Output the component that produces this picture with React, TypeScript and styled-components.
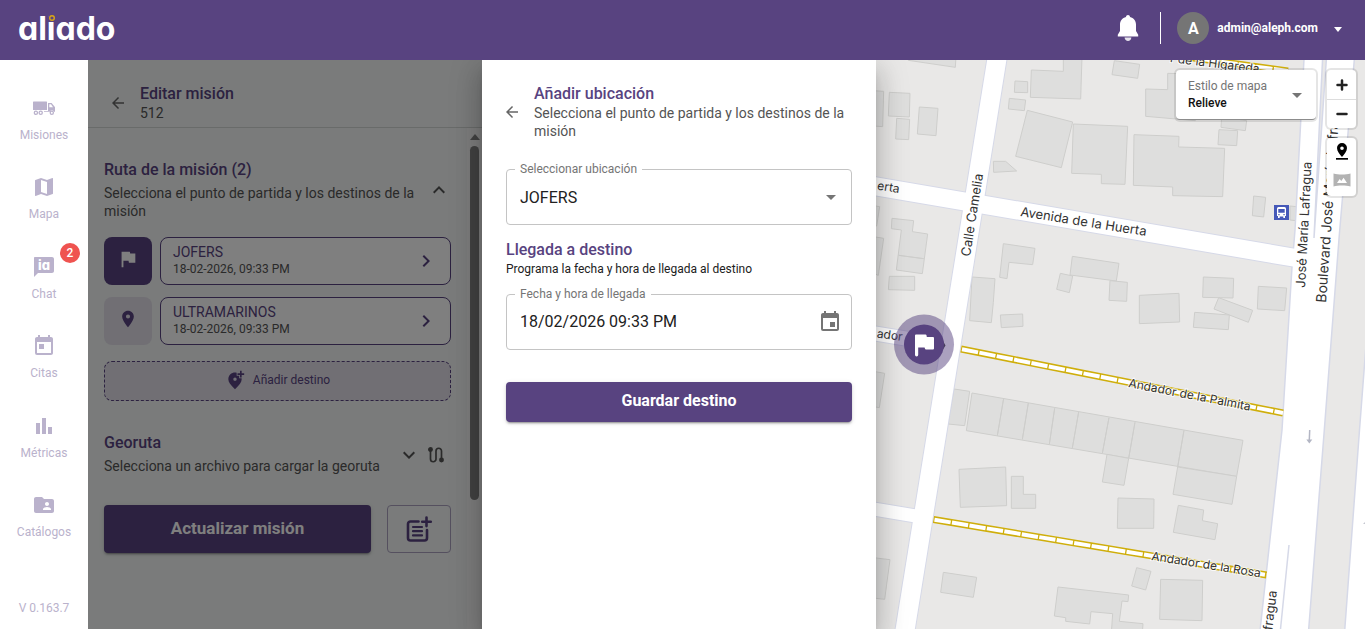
import React from 'react';
import styled, { createGlobalStyle } from 'styled-components';
import {
  MdAddLocationAlt,
  MdArrowBack,
  MdArrowDropDown,
  MdChevronRight,
  MdEvent,
  MdFlag,
  MdFolderShared,
  MdKeyboardArrowDown,
  MdKeyboardArrowUp,
  MdMap,
  MdPlace,
  MdToday,
} from 'react-icons/md';

const purple = '#584380';
const muted = '#bab2cc';

const GlobalStyle = createGlobalStyle`
  *, *::before, *::after { box-sizing: border-box; }
  body {
    margin: 0;
    font-family: Roboto, "Liberation Sans", sans-serif;
    color: #212121;
    background: #fff;
  }
  button, input, select { font-family: inherit; }
  h1, h2, p, ul { margin: 0; padding: 0; }
  svg { display: block; flex: none; }
`;

/* ---------- shell ---------- */

const Page = styled.div`
  display: flex;
  flex-direction: column;
  min-height: 100vh;
`;

const TopBar = styled.header`
  position: relative;
  z-index: 3;
  display: flex;
  align-items: center;
  justify-content: space-between;
  height: 60px;
  padding: 0 20px 4px 18px;
  background: ${purple};
  color: #fff;
`;

const Account = styled.div`
  display: flex;
  align-items: center;
  gap: 16px;
`;

const PlainButton = styled.button`
  display: flex;
  flex: none;
  align-items: center;
  justify-content: center;
  padding: 0;
  border: 0;
  background: none;
  color: inherit;
  cursor: pointer;
`;

const BellButton = styled(PlainButton)`
  width: 32px;
  height: 32px;
`;

const Divider = styled.span`
  width: 1px;
  height: 32px;
  background: #fff;
`;

const UserButton = styled(PlainButton)`
  gap: 8px;
  font-size: 12px;
  font-weight: 700;
`;

const Avatar = styled.span`
  display: grid;
  place-items: center;
  width: 32px;
  height: 32px;
  border-radius: 50%;
  background: #757575;
  font-size: 16px;
  font-weight: 700;
`;

const Caret = styled.span`
  margin: 2px 3px 0 8px;
  border: 4px solid transparent;
  border-top: 5px solid #fff;
  border-bottom: 0;
`;

const Main = styled.main`
  display: flex;
  flex: 1;
`;

/* ---------- side navigation ---------- */

const SideNav = styled.nav`
  display: flex;
  flex-direction: column;
  flex: none;
  width: 88px;
  padding-top: 20px;
  background: #fff;
  color: ${muted};
  text-align: center;
`;

const NavList = styled.ul`
  display: flex;
  flex: 1;
  flex-direction: column;
  list-style: none;
`;

const NavItem = styled.li`
  flex: 1;
  display: grid;
  place-items: center;
  min-height: 64px;
`;

const NavLink = styled.a`
  position: relative;
  display: flex;
  flex-direction: column;
  align-items: center;
  gap: 6px;
  width: 100%;
  color: inherit;
  font-size: 12px;
  line-height: 18px;
  text-decoration: none;
`;

const Badge = styled.span`
  position: absolute;
  top: -12px;
  right: 8px;
  width: 20px;
  height: 20px;
  border-radius: 50%;
  background: #ef5350;
  color: #fff;
  font-size: 12px;
  font-weight: 500;
  line-height: 20px;
`;

const Version = styled.p`
  height: 72px;
  padding-top: 42px;
  font-size: 12px;
  line-height: 18px;
`;

/* ---------- mission panel ---------- */

const Panel = styled.section`
  position: relative;
  display: flex;
  flex: none;
  flex-direction: column;
  width: 394px;
  background: #f4f7f6;
`;

const Backdrop = styled.div`
  position: absolute;
  inset: 0;
  background: rgba(0, 0, 0, 0.5);
`;

const PaneHeader = styled.header<{ $ruled?: boolean }>`
  display: flex;
  align-items: center;
  gap: 8px;
  padding: 24px 16px 5px;
  border-bottom: ${(p) => (p.$ruled ? '1px solid #d3d6d5' : '0')};
`;

const BackButton = styled(PlainButton)`
  width: 28px;
  height: 28px;
  color: #666;
`;

const Title = styled.h2`
  color: ${purple};
  font-size: 16px;
  font-weight: 500;
  line-height: 20px;
`;

const Lead = styled.p<{ $gap?: number }>`
  margin-top: ${(p) => p.$gap ?? 0}px;
  color: #545454;
  font-size: 14px;
  line-height: 18px;
`;

const PanelBody = styled.div`
  display: flex;
  flex: 1;
`;

const PanelContent = styled.div`
  flex: 1;
  padding: 32px 16px;
`;

const SectionHead = styled.div`
  display: flex;
  align-items: center;
  justify-content: space-between;
  color: #545454;
`;

const HeadActions = styled.div`
  display: flex;
  align-items: center;
  gap: 6px;
  padding: 2px 6px 0 0;
`;

const StopList = styled.ul`
  display: flex;
  flex-direction: column;
  gap: 12px;
  margin: 17px 0 16px;
  list-style: none;
`;

const Stop = styled.li`
  display: flex;
  gap: 8px;
`;

const StopIcon = styled.span<{ $first?: boolean }>`
  display: grid;
  place-items: center;
  width: 48px;
  height: 48px;
  padding-bottom: 4px;
  border-radius: 8px;
  background: ${(p) => (p.$first ? purple : '#e2dfe9')};
  color: ${(p) => (p.$first ? '#fff' : purple)};
`;

const StopCard = styled.button`
  display: flex;
  flex: 1;
  align-items: center;
  justify-content: space-between;
  padding: 0 12px;
  border: 1px solid ${purple};
  border-radius: 8px;
  background: #fff;
  color: ${purple};
  text-align: left;
`;

const StopName = styled.span`
  display: block;
  font-size: 14px;
  line-height: 16px;
`;

const StopTime = styled.span`
  display: block;
  color: #545454;
  font-size: 12px;
  line-height: 18px;
`;

const AddStop = styled.button`
  display: flex;
  align-items: center;
  justify-content: center;
  gap: 8px;
  width: 100%;
  height: 40px;
  margin-bottom: 32px;
  padding-bottom: 3px;
  border: 1px dashed ${purple};
  border-radius: 8px;
  background: #e2dfe9;
  color: ${purple};
  font-size: 12px;
`;

const Actions = styled.div`
  display: flex;
  gap: 16px;
  margin-top: 30px;
`;

const PrimaryButton = styled.button<{ $tall?: boolean }>`
  flex: 1;
  width: 100%;
  height: ${(p) => (p.$tall ? 48 : 40)}px;
  padding: 0 0 3px;
  border: 0;
  border-radius: 4px;
  background: ${purple};
  color: #fff;
  font-size: ${(p) => (p.$tall ? 17 : 16)}px;
  font-weight: 700;
  box-shadow: 0 3px 1px -2px rgba(0, 0, 0, 0.2), 0 2px 2px rgba(0, 0, 0, 0.14),
    0 1px 5px rgba(0, 0, 0, 0.12);
`;

const NoteButton = styled(PlainButton)`
  width: 64px;
  height: 48px;
  border: 1px solid #aba1bf;
  border-radius: 4px;
  color: ${purple};
`;

const Scrollbar = styled.div`
  display: flex;
  flex-direction: column;
  align-items: center;
  gap: 6px;
  width: 15px;
  padding: 6px 0;
  background: #fafafa;
`;

const ScrollArrow = styled.span`
  border: 5px solid transparent;
  border-bottom: 6px solid #858585;
  border-top: 0;
`;

const ScrollThumb = styled.span`
  width: 9px;
  height: 354px;
  border-radius: 5px;
  background: #858585;
`;

/* ---------- location drawer ---------- */

const Drawer = styled.aside`
  position: relative;
  z-index: 2;
  flex: none;
  width: 394px;
  background: #fff;
  box-shadow: 0 8px 10px -5px rgba(0, 0, 0, 0.2), 0 16px 24px 2px rgba(0, 0, 0, 0.14),
    0 6px 30px 5px rgba(0, 0, 0, 0.12);
`;

const Form = styled.form`
  display: flex;
  flex-direction: column;
  padding: 24px;
`;

const Field = styled.div`
  position: relative;
  display: flex;
  align-items: center;
  height: 56px;
  color: #757575;
`;

const FieldLabel = styled.label`
  position: absolute;
  top: -8px;
  left: 9px;
  padding: 0 5px;
  background: #fff;
  font-size: 12px;
  line-height: 16px;
`;

const controlStyle = `
  width: 100%;
  height: 56px;
  border: 1px solid #c4c4c4;
  border-radius: 4px;
  appearance: none;
  background: #fff;
  color: #212121;
  font-size: 16px;
`;

const SelectBox = styled.select`
  ${controlStyle}
  padding: 0 48px 0 13px;
`;

const DateBox = styled.input`
  ${controlStyle}
  padding: 0 48px 2px 13px;
`;

const FieldIcon = styled.span`
  position: absolute;
  right: 9px;
  pointer-events: none;
`;

const FieldButton = styled(PlainButton)`
  position: absolute;
  right: 10px;
`;

const Hint = styled.p`
  margin: 0 0 16px;
  font-size: 12px;
  line-height: 18px;
`;

const ArrivalTitle = styled(Title)`
  margin-top: 15px;
`;

const SubmitRow = styled.div`
  display: flex;
  margin-top: 32px;
`;

/* ---------- map ---------- */

const MapArea = styled.section`
  position: relative;
  flex: 1;
  min-width: 0;
  overflow: hidden;
  background: #e9e8e7;
`;

const MapCanvas = styled.svg`
  position: absolute;
  inset: 0;
  width: 100%;
  height: 100%;
`;

const MapControls = styled.div`
  position: absolute;
  top: 10px;
  right: 9px;
  display: flex;
  align-items: flex-start;
  gap: 11px;
`;

const StylePicker = styled.div`
  position: relative;
  width: 140px;
  height: 50px;
  padding: 8px 12px 0;
  border-bottom: 1px solid #8c8c8c;
  border-radius: 4px;
  background: #fff;
  box-shadow: 0 0 0 2px rgba(0, 0, 0, 0.1);
  color: #757575;
`;

const StyleLabel = styled.label`
  display: block;
  font-size: 12px;
  line-height: 16px;
`;

const StyleSelect = styled.select`
  display: block;
  width: 100%;
  height: 18px;
  padding: 0;
  border: 0;
  appearance: none;
  background: none;
  color: #111;
  font-size: 12px;
  font-weight: 500;
`;

const StyleArrow = styled.span`
  position: absolute;
  top: 13px;
  right: 7px;
  pointer-events: none;
`;

const ControlColumn = styled.div`
  display: flex;
  flex-direction: column;
  gap: 10px;
`;

const ControlGroup = styled.div`
  border-radius: 4px;
  background: #fff;
  box-shadow: 0 0 0 2px rgba(0, 0, 0, 0.1);
`;

const MapButton = styled(PlainButton)<{ $ruled?: boolean }>`
  width: 29px;
  height: 29px;
  color: #222;
  border-top: ${(p) => (p.$ruled ? '1px solid #ddd' : '0')};
`;

/* ---------- drawings ---------- */

const Logo = () => (
  <svg width="106" height="48" viewBox="0 -6 106 48" role="img" aria-label="aliado">
    <text
      x="0"
      y="30"
      fill="#fff"
      fontFamily="Inter, sans-serif"
      fontWeight="700"
      fontSize="32"
      style={{ fontFeatureSettings: '"cv11"' }}
    >
      aliado
    </text>
    <circle cx="34" cy="8" r="4" fill={purple} />
    <circle cx="34" cy="8" r="2.3" fill="none" stroke="#d9a514" strokeWidth="1.4" />
  </svg>
);

const Bell = () => (
  <svg width="22" height="28" viewBox="0 0 22 28" fill="currentColor">
    <path d="M11 1c1.1 0 2 .8 2 1.9 3.7.8 6 3.7 6 7.6v6.6l2.2 3.6v1.800H.8v-1.800L3 17.100v-6.600C3 6.600 5.300 3.700 9 2.900 9 1.800 9.900 1 11 1z" />
    <path d="M7.600 23.600h6.800c-.2 2-1.600 3.400-3.400 3.400s-3.200-1.400-3.400-3.400z" opacity=".85" />
  </svg>
);

const Truck = () => (
  <svg width="24" height="24" viewBox="0 0 24 24" fill="currentColor">
    <path d="M1.600 5.500h12.800c.4 0 .6.200.6.600V14H1V6.100c0-.4.200-.6.600-.6z" />
    <path
      fillRule="evenodd"
      d="M16 7h3.600l2.900 3.600.5.700v4.500h-.9a2.300 2.300 0 0 0-4.400 0H12V15h4zm1.300 1.300v3h3.700l-2-3z"
    />
    <g fill="none" stroke="currentColor" strokeWidth="1.300">
      <circle cx="3.900" cy="16.800" r="1.600" />
      <circle cx="8.700" cy="16.800" r="1.600" />
      <circle cx="19.800" cy="16.800" r="1.600" />
    </g>
  </svg>
);

const ChatIa = () => (
  <svg width="24" height="24" viewBox="0 0 24 24">
    <path fill="currentColor" d="M20 2H3c-.6 0-1 .4-1 1v19l4-4h14c1.100 0 2-.9 2-2V4c0-1.100-.9-2-2-2z" />
    <text
      x="12"
      y="14.500"
      textAnchor="middle"
      fill="#fff"
      fontFamily="Inter, sans-serif"
      fontWeight="800"
      fontSize="13"
      style={{ fontFeatureSettings: '"cv11"' }}
    >
      ia
    </text>
  </svg>
);

const Bars = () => (
  <svg width="24" height="24" viewBox="0 0 24 24" fill="currentColor">
    <path d="M4 9h4v11H4zm12 4h4v7h-4zm-6-9h4v16h-4z" />
  </svg>
);

const RouteIcon = () => (
  <svg width="18" height="18" viewBox="0 0 18 18" fill="none" stroke="currentColor" strokeWidth="1.700">
    <path d="M3.500 4v9a2.750 2.750 0 0 0 5.500 0V5a2.750 2.750 0 0 1 5.500 0v9" />
    <circle cx="3.500" cy="3.500" r="1.600" fill="currentColor" />
    <circle cx="14.500" cy="14" r="1.600" fill="currentColor" />
  </svg>
);

const NoteAdd = () => (
  <svg width="28" height="28" viewBox="0 0 28 28" fill="none" stroke="currentColor" strokeWidth="2.600" strokeLinecap="round">
    <path d="M13.500 6.500H5.500a2.500 2.500 0 0 0-2.500 2.500v14a2.500 2.500 0 0 0 2.500 2.500h14a2.500 2.500 0 0 0 2.500-2.500V15" />
    <path d="M21.500 2.500v8.600M17.200 6.800h8.600" />
    <path d="M8 12h9M8 16.200h9M8 20.400h9" strokeWidth="2.200" />
  </svg>
);

/* ---------- map data ---------- */

type Tile = { x: number; y: number; shapes: string[] };

/* Building outlines per tile, in thirds of a map pixel. */
const tiles: Tile[] = [
  {
    x: 870,
    y: 0,
    shapes: [
      '115,181 256,202 258,170 115,170',
      '10,272 41,274 38,380 10,378',
      '58,277 120,280 118,351 55,348',
      '80,355 119,358 116,419 77,417',
      '148,321 204,325 198,407 142,402',
      '370,484 407,484 440,513 371,517',
      '435,243 473,245 473,278 433,277',
      '418,295 467,300 463,332 415,327',
      '484,210 580,214 580,170 636,170 632,297 481,292',
      '472,331 608,366 574,503 437,469',
      '610,372 773,379 765,553 694,551 694,523 605,520',
      '733,182 809,193 803,235 726,224',
      '79,810 94,690 64,686 66,655 131,662 127,695 173,702 157,821',
      '86,766 161,776',
      '10,617 29,620 20,678 10,677',
      '10,710 41,715 25,826 10,820',
    ],
  },
  {
    x: 1120,
    y: 0,
    shapes: [
      '77,267 143,269 143,220 230,222 226,362 77,349',
      '42,404 177,409 176,441 314,445 308,590 158,587 158,561 40,556',
      '305,350 380,362 376,392 303,382',
      '297,389 353,392 350,437 294,434',
      '401,588 437,592 431,651 397,647',
      '510,618 530,620 528,662 510,660',
    ],
  },
  {
    x: 870,
    y: 230,
    shapes: [
      '400,41 495,55 488,104 417,97 411,146 389,142',
      '306,141 375,146 370,217 364,278 299,272',
      '391,255 458,252 459,289 394,293',
      '607,79 747,100 739,153 600,135',
      '571,130 608,138 598,188 560,178',
      '720,152 772,157 770,214 717,211',
      '58,139 134,139 134,181 55,179',
      '10,424 44,430 28,533 10,530',
      '252,477 299,484 284,587 234,582',
      '306,489 1119,631 1100,739 289,602',
      '401,505 382,617',
      '475,519 457,628',
      '554,535 538,643',
      '626,546 607,654',
      '717,563 697,670',
      '795,577 776,685',
      '942,601 923,711',
      '711,673 697,756 762,766 776,685',
      '923,711 909,793 1086,823 1100,739',
    ],
  },
  {
    x: 1110,
    y: 230,
    shapes: [
      '88,196 207,190 209,276 88,281',
      '280,141 371,145 369,204 278,202',
      '326,203 428,241 415,277 312,237',
      '254,247 358,255 355,299 250,292',
      '445,169 530,174 524,242 442,237',
    ],
  },
  {
    x: 870,
    y: 420,
    shapes: [
      '267,148 407,141 410,257 271,262',
      '424,169 460,169 460,223 497,223 497,265 424,265',
      '10,413 60,419 44,538 10,534',
      '220,457 320,472 310,532 212,517',
      '564,501 776,525 774,545 756,543 748,604 819,611 817,640 724,640 728,581 663,575 659,612 587,604 587,593 553,588',
    ],
  },
  {
    x: 1110,
    y: 420,
    shapes: [
      '24,234 132,237 131,325 22,325',
      '205,256 281,270 277,302 323,311 315,359 190,337',
      '80,443 123,454 107,510 65,498',
      '152,478 278,481 276,602 149,598',
    ],
  },
];

const streets = [
  { d: 'M1000 40L902 649', w: 19 },
  { d: 'M866 184.600L1305 259.500', w: 18 },
  { d: 'M866 507.800L925 517.500', w: 13 },
  { d: 'M866 332L945 345', w: 14 },
];

const walkways = ['M961 349L1283 413', 'M933.500 519.500L1266.500 575', 'M1150 52L1288 71'];

type Label = { x: number; y: number; turn: number; text: string; size?: number; end?: boolean };

const labels: Label[] = [
  { x: 1259, y: 73, turn: 7, text: 'r de la Higareda', size: 12, end: true },
  { x: 899, y: 193, turn: 9, text: 'erta', size: 12, end: true },
  { x: 902, y: 341, turn: 8, text: 'ador', size: 12, end: true },
  { x: 1020, y: 216, turn: 9, text: 'Avenida de la Huerta' },
  { x: 970, y: 257, turn: -81, text: 'Calle Camelia' },
  { x: 1305, y: 288, turn: -87, text: 'José María Lafragua' },
  { x: 1326, y: 303, turn: -86, text: 'Boulevard José María Lafragua', size: 14 },
  { x: 1128, y: 387, turn: 11, text: 'Andador de la Palmita', size: 12 },
  { x: 1151, y: 560, turn: 9, text: 'Andador de la Rosa', size: 12 },
  { x: 1277, y: 591, turn: -83, text: 'fragua', end: true },
];

const StreetMap = () => (
  <MapCanvas viewBox="876 60 489 569" preserveAspectRatio="xMinYMin slice" role="img" aria-label="Mapa">
    {tiles.map((tile) => (
      <g
        key={`${tile.x}-${tile.y}`}
        transform={`translate(${tile.x} ${tile.y}) scale(0.33333)`}
        fill="#dededd"
        stroke="#cececc"
        strokeWidth="3"
      >
        {tile.shapes.map((points) => (
          <polygon key={points} points={points} />
        ))}
      </g>
    ))}
    {streets.map((s) => (
      <path key={s.d} d={s.d} stroke="#d6d9e8" strokeWidth={s.w + 2} />
    ))}
    <path
      d="M1305 40L1295 230L1292 267L1282 430L1271 530L1258 649H1307L1308.700 629L1324.300 430L1339.300 235L1356 40z"
      fill="#fff"
      stroke="#d6d9e8"
      strokeWidth="1.500"
    />
    {streets.map((s) => (
      <path key={s.d} d={s.d} stroke="#fff" strokeWidth={s.w} />
    ))}
    <path d="M1323 50L1327 50L1314 238z" fill="#e9e8e7" stroke="#d6d9e8" strokeWidth="1.500" />
    <path d="M1289 545L1280.500 629" stroke="#d6d9e8" strokeWidth="1.500" />
    <path d="M1366 345L1359.500 430L1344 640H1380V345z" fill="#fff" stroke="#d6d9e8" strokeWidth="1.500" />
    <path d="M1309.700 430L1309.300 440" stroke="#b3b6c4" strokeWidth="1.500" />
    <path d="M1306.300 439.500h6l-3 4z" fill="#b3b6c4" />
    <path d="M1363 524l4-4v10h-2v-6z" fill="#c5c7d0" />
    {walkways.map((d) => (
      <g key={d} fill="none">
        <path d={d} stroke="#cfae0b" strokeWidth="7" />
        <path d={d} stroke="#fff" strokeWidth="4" strokeDasharray="16.400 1.300" strokeDashoffset="-1" />
      </g>
    ))}
    {labels.map((l) => (
      <text
        key={l.text + l.x}
        transform={`translate(${l.x} ${l.y}) rotate(${l.turn})`}
        textAnchor={l.end ? 'end' : 'start'}
        fontFamily='Inter, "Liberation Sans", sans-serif'
        fontSize={l.size ?? 13}
        fill="#333"
        stroke="#fff"
        strokeWidth="2"
        strokeOpacity=".8"
        paintOrder="stroke"
      >
        {l.text}
      </text>
    ))}
    <g transform="translate(1274 205)">
      <rect width="15" height="15" fill="#4558b8" />
      <path
        fill="#fff"
        fillRule="evenodd"
        d="M4.500 2h6A1.500 1.500 0 0 1 12 3.500V11h-1v2H9.300v-1.500H5.700V13H4v-2H3V3.500A1.500 1.500 0 0 1 4.500 2zM4.300 4v3.800h6.400V4zM4.300 9v1.200h1.300V9zm5.100 0v1.200h1.300V9z"
      />
    </g>
    <path d="M943 341l2.500 4.500-2.500 4z" fill="#333" />
    <circle cx="924" cy="344.500" r="30" fill={purple} opacity=".5" />
    <circle cx="924" cy="344.500" r="20" fill={purple} />
    <path
      fill="#fff"
      d="M916 334.500h9.500a1 1 0 0 1 1 .8l.3 1.700h6.200a1 1 0 0 1 1 1V348.500a1 1 0 0 1-1 1h-7a1 1 0 0 1-1-.8l-.4-1.200h-6.400v7.300a1.300 1.300 0 0 1-3.200 0V335.500a1 1 0 0 1 1-1z"
    />
  </MapCanvas>
);

/* ---------- page ---------- */

const navItems = [
  { label: 'Misiones', icon: <Truck /> },
  { label: 'Mapa', icon: <MdMap size={24} /> },
  { label: 'Chat', icon: <ChatIa />, badge: 2 },
  { label: 'Citas', icon: <MdToday size={24} /> },
  { label: 'Métricas', icon: <Bars /> },
  { label: 'Catálogos', icon: <MdFolderShared size={24} /> },
];

const stops = [
  { name: 'JOFERS', time: '18-02-2026, 09:33 PM' },
  { name: 'ULTRAMARINOS', time: '18-02-2026, 09:33 PM' },
];

export default function App() {
  return (
    <Page>
      <GlobalStyle />
      <TopBar>
        <Logo />
        <Account>
          <BellButton aria-label="Notificaciones">
            <Bell />
          </BellButton>
          <Divider />
          <UserButton>
            <Avatar>A</Avatar>
            admin@aleph.com
            <Caret />
          </UserButton>
        </Account>
      </TopBar>

      <Main>
        <SideNav>
          <NavList>
            {navItems.map((item) => (
              <NavItem key={item.label}>
                <NavLink href="#">
                  {item.icon}
                  {item.label}
                  {item.badge && <Badge>{item.badge}</Badge>}
                </NavLink>
              </NavItem>
            ))}
          </NavList>
          <Version>V 0.163.7</Version>
        </SideNav>

        <Panel>
          <PaneHeader $ruled>
            <BackButton aria-label="Volver">
              <MdArrowBack size={18} />
            </BackButton>
            <div>
              <Title as="h1">Editar misión</Title>
              <Lead>512</Lead>
            </div>
          </PaneHeader>
          <PanelBody>
            <PanelContent>
              <SectionHead>
                <div>
                  <Title>Ruta de la misión (2)</Title>
                  <Lead $gap={4}>Selecciona el punto de partida y los destinos de la misión</Lead>
                </div>
                <PlainButton aria-label="Contraer ruta">
                  <MdKeyboardArrowUp size={24} />
                </PlainButton>
              </SectionHead>
              <StopList>
                {stops.map((stop, i) => (
                  <Stop key={stop.name}>
                    <StopIcon $first={i === 0}>
                      {i === 0 ? <MdFlag size={22} /> : <MdPlace size={20} />}
                    </StopIcon>
                    <StopCard>
                      <span>
                        <StopName>{stop.name}</StopName>
                        <StopTime>{stop.time}</StopTime>
                      </span>
                      <MdChevronRight size={24} />
                    </StopCard>
                  </Stop>
                ))}
              </StopList>
              <AddStop>
                <MdAddLocationAlt size={20} />
                Añadir destino
              </AddStop>
              <SectionHead>
                <div>
                  <Title>Georuta</Title>
                  <Lead $gap={4}>Selecciona un archivo para cargar la georuta</Lead>
                </div>
                <HeadActions>
                  <PlainButton aria-label="Expandir georuta">
                    <MdKeyboardArrowDown size={24} />
                  </PlainButton>
                  <PlainButton aria-label="Trazar georuta">
                    <RouteIcon />
                  </PlainButton>
                </HeadActions>
              </SectionHead>
              <Actions>
                <PrimaryButton $tall>Actualizar misión</PrimaryButton>
                <NoteButton aria-label="Agregar nota">
                  <NoteAdd />
                </NoteButton>
              </Actions>
            </PanelContent>
            <Scrollbar>
              <ScrollArrow />
              <ScrollThumb />
            </Scrollbar>
          </PanelBody>
          <Backdrop />
        </Panel>

        <Drawer>
          <PaneHeader>
            <BackButton aria-label="Cerrar">
              <MdArrowBack size={18} />
            </BackButton>
            <div>
              <Title>Añadir ubicación</Title>
              <Lead>Selecciona el punto de partida y los destinos de la misión</Lead>
            </div>
          </PaneHeader>
          <Form>
            <Field>
              <SelectBox id="location" defaultValue="JOFERS">
                <option>JOFERS</option>
                <option>ULTRAMARINOS</option>
              </SelectBox>
              <FieldLabel htmlFor="location">Seleccionar ubicación</FieldLabel>
              <FieldIcon>
                <MdArrowDropDown size={24} />
              </FieldIcon>
            </Field>
            <ArrivalTitle>Llegada a destino</ArrivalTitle>
            <Hint>Programa la fecha y hora de llegada al destino</Hint>
            <Field>
              <DateBox id="arrival" defaultValue="18/02/2026 09:33 PM" />
              <FieldLabel htmlFor="arrival">Fecha y hora de llegada</FieldLabel>
              <FieldButton type="button" aria-label="Elegir fecha">
                <MdEvent size={24} />
              </FieldButton>
            </Field>
            <SubmitRow>
              <PrimaryButton type="button">Guardar destino</PrimaryButton>
            </SubmitRow>
          </Form>
        </Drawer>

        <MapArea>
          <StreetMap />
          <MapControls>
            <StylePicker>
              <StyleLabel htmlFor="map-style">Estilo de mapa</StyleLabel>
              <StyleSelect id="map-style" defaultValue="Relieve">
                <option>Relieve</option>
              </StyleSelect>
              <StyleArrow>
                <MdArrowDropDown size={24} />
              </StyleArrow>
            </StylePicker>
            <ControlColumn>
              <ControlGroup>
                <MapButton aria-label="Acercar">
                  <svg width="12" height="12" viewBox="0 0 12 12" stroke="currentColor" strokeWidth="2.500" strokeLinecap="round">
                    <path d="M6 1.500v9M1.500 6h9" />
                  </svg>
                </MapButton>
                <MapButton $ruled aria-label="Alejar">
                  <svg width="12" height="12" viewBox="0 0 12 12" stroke="currentColor" strokeWidth="2.500" strokeLinecap="round">
                    <path d="M1.500 6h9" />
                  </svg>
                </MapButton>
              </ControlGroup>
              <ControlGroup>
                <MapButton aria-label="Ubicación">
                  <svg width="18" height="20" viewBox="0 1 18 20" fill="#000">
                    <path
                      fillRule="evenodd"
                      d="M9 1a5 5 0 0 1 5 5c0 3.300-2.800 6.300-5 9-2.200-2.700-5-5.700-5-9a5 5 0 0 1 5-5zm0 3.400a1.800 1.800 0 1 0 0 3.600 1.800 1.800 0 0 0 0-3.600z"
                    />
                    <path d="M3 16h12v1.700H3z" />
                  </svg>
                </MapButton>
                <MapButton aria-label="Vista panorámica">
                  <svg width="18" height="20" viewBox="0 0 18 20" fill="#b3b3b3">
                    <path
                      fillRule="evenodd"
                      d="M.5 1.500C3 2.300 6 2.600 9 2.600s6-.3 8.500-1.100v13c-2.500-.8-5.500-1.100-8.500-1.100s-6 .3-8.500 1.100zM4 11h10l-3.400-5.200-2.300 3.200-1.600-2z"
                    />
                  </svg>
                </MapButton>
              </ControlGroup>
            </ControlColumn>
          </MapControls>
        </MapArea>
      </Main>
    </Page>
  );
}
